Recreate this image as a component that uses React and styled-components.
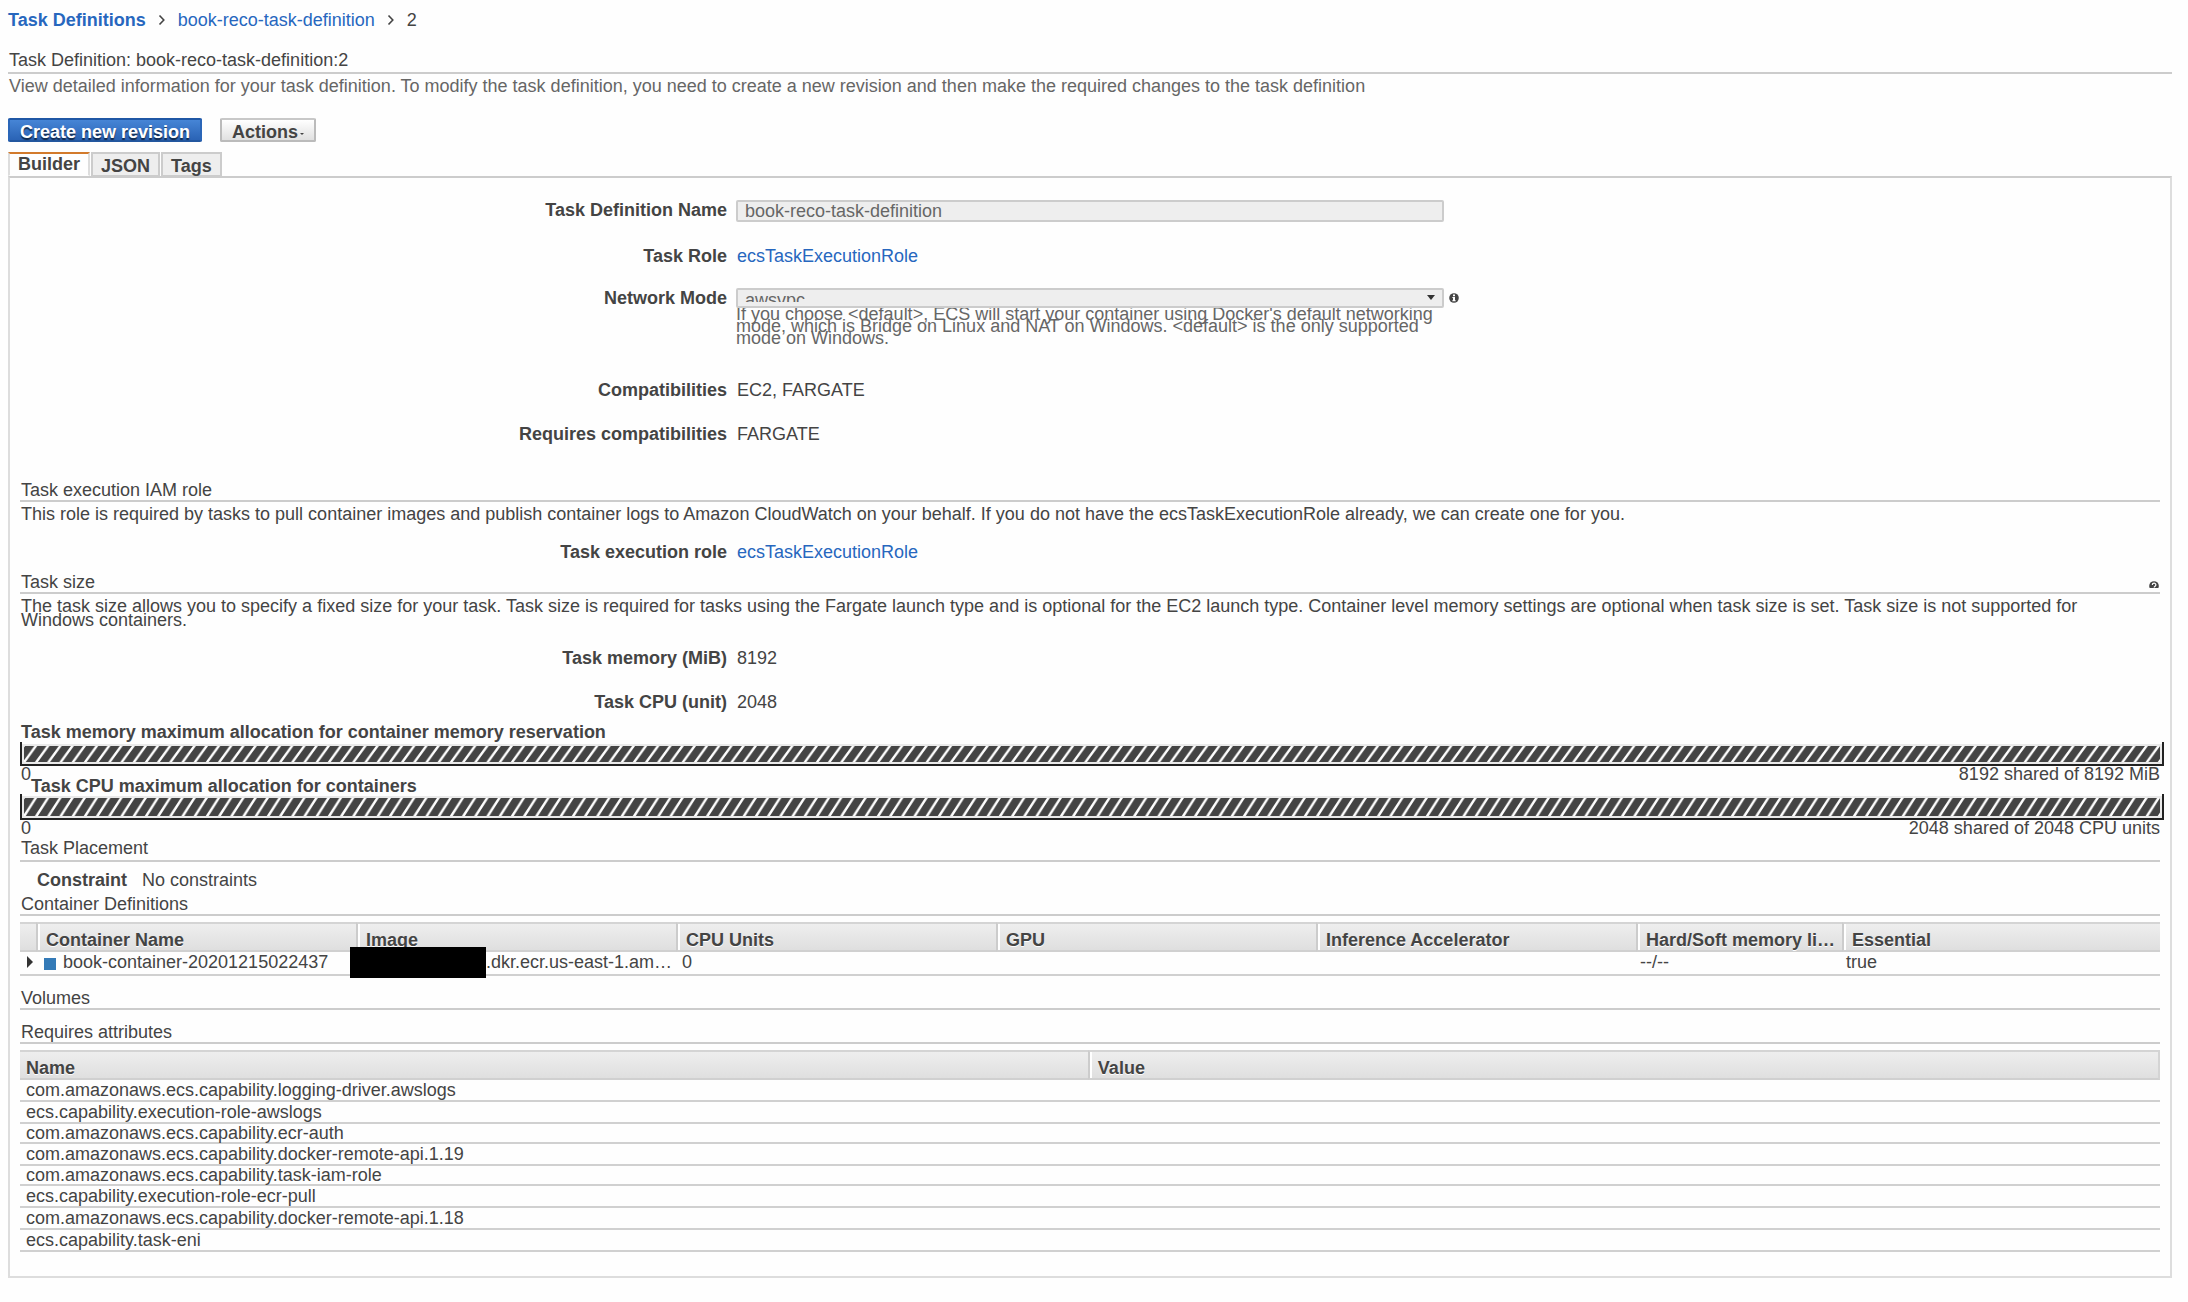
import React from "react";
import styled, { createGlobalStyle, css } from "styled-components";

const Global = createGlobalStyle`
  * { box-sizing: border-box; }
  body {
    margin: 0;
    background: #fefefe;
    color: #444;
    font: 18px/20px "Liberation Sans", Arial, Helvetica, sans-serif;
  }
  a { color: #2767be; text-decoration: none; }
  h1, h2, p, dl, dd, dt, ol { margin: 0; padding: 0; font-size: 18px; font-weight: normal; }
`;

const Page = styled.div`
  padding: 10px 16px 24px 8px;
`;

const Crumbs = styled.ol`
  display: flex;
  align-items: center;
  gap: 12px;
  list-style: none;
  height: 20px;
  a[data-root] { font-weight: bold; }
`;

const Crumb = styled.li`
  display: flex;
  align-items: center;
  gap: 12px;
`;

const Chevron = styled.svg`
  display: block;
  width: 8px;
  height: 12px;
`;

const Heading = styled.h1`
  border-bottom: 2px solid #ccc;
  line-height: 20px;
  height: ${(p) => (p.$roomy ? 24 : 22)}px;
  padding: 0 1px;
  margin-top: ${(p) => p.$top}px;
  display: flex;
  align-items: flex-start;
  justify-content: space-between;
`;

const Intro = styled.p`
  color: #666;
  padding: 2px 1px 0;
`;

const Toolbar = styled.div`
  display: flex;
  gap: 18px;
  margin-top: 22px;
`;

const Button = styled.button`
  height: 24px;
  padding: 4px 10px 0;
  border: 2px solid #bbb;
  border-top-color: #c8c8c8;
  border-radius: 2px;
  background: linear-gradient(#fff, #e0e0e0);
  color: #444;
  font: bold 18px/18px "Liberation Sans", Arial, sans-serif;
  display: flex;
  align-items: center;
  gap: 2px;
  ${(p) =>
    p.$primary &&
    css`
      color: #fff;
      border-color: #1f57a5 #2a66b8 #23579f;
      background: linear-gradient(#4685d6, #2a63b5);
      text-shadow: 0 2px 1px rgba(0, 0, 0, 0.6);
    `}
`;

const TinyCaret = styled.svg`
  width: 4px;
  height: 4px;
  margin-top: 4px;
`;

const Tabs = styled.div`
  display: flex;
  align-items: flex-end;
  gap: 1px;
  margin-top: 10px;
`;

const Tab = styled.button`
  height: 24px;
  padding: 2px 8px 0;
  border: 2px solid #ccc;
  border-bottom-width: 1px;
  background: #eee;
  color: #444;
  font: bold 18px/18px "Liberation Sans", Arial, sans-serif;
  ${(p) =>
    p.$active &&
    css`
      padding: 0 8px 2px;
      background: #fefefe;
      border-color: #d27a2b #ddd transparent;
    `}
`;

const Panel = styled.section`
  border: 2px solid #ddd;
  border-top-color: #ccc;
  padding: 22px 10px 24px;
`;

const Field = styled.div`
  display: grid;
  grid-template-columns: 711fr 708fr 711fr;
  column-gap: 5px;
  align-items: start;
  margin-top: ${(p) => p.$top}px;
  line-height: 20px;
`;

const Label = styled.label`
  text-align: right;
  font-weight: bold;
  padding-right: 4px;
`;

const Value = styled.span`
  padding-left: 1px;
`;

const control = css`
  display: block;
  width: 100%;
  border: 2px solid #ccc;
  border-radius: 2px;
  background: #eee;
  color: #666;
  font: 18px/20px "Liberation Sans", Arial, sans-serif;
`;

const TextInput = styled.input`
  ${control}
  height: 22px;
  padding: 1px 7px 0;
`;

const SelectWrap = styled.div`
  position: relative;
`;

const Select = styled.select`
  ${control}
  appearance: none;
  height: 20px;
  padding: 0 7px 4px;
`;

const SelectCaret = styled.svg`
  position: absolute;
  right: 9px;
  top: 7px;
  width: 8px;
  height: 5px;
`;

const Help = styled.p`
  color: #666;
  line-height: 12px;
`;

const IconButton = styled.button`
  border: 0;
  padding: 0;
  background: none;
  width: 10px;
  height: ${(p) => p.$height}px;
  margin-top: ${(p) => p.$top}px;
  display: flex;
  align-items: flex-start;
  overflow: hidden;
  svg { flex: none; }
`;

const Text = styled.p`
  padding: 2px 1px 0;
  ${(p) =>
    p.$dense &&
    css`
      padding: 5px 40px 0 1px;
      line-height: 14px;
    `}
`;

const BarTitle = styled.h2`
  font-weight: bold;
  line-height: 12px;
  padding-left: ${(p) => p.$indent}px;
  margin-top: ${(p) => p.$top}px;
`;

const Bar = styled.div`
  border: 2px solid #222;
  border-top: 0;
  height: ${(p) => p.$height}px;
  padding: 4px 2px 2px;
  margin: ${(p) => p.$top}px -4px 0 0;
  background: linear-gradient(#fefefe 2px, #eaeaea 2px);
`;

const Stripes = styled.svg`
  display: block;
  width: 100%;
  height: 100%;
`;

const Scale = styled.div`
  display: flex;
  justify-content: space-between;
  height: 14px;
  line-height: 16px;
  padding-left: 1px;
`;

const Constraint = styled.dl`
  display: flex;
  gap: 15px;
  padding-left: 17px;
  margin-top: 8px;
  dt { font-weight: bold; }
`;

const Table = styled.table`
  width: 100%;
  table-layout: fixed;
  border-collapse: separate;
  border-spacing: 0;
  margin-top: 6px;
  th {
    height: 30px;
    padding: 6px 4px 0 6px;
    text-align: left;
    line-height: 20px;
    border-top: 2px solid #d4d4d4;
    border-bottom: 2px solid #d0d0d0;
    background: linear-gradient(#eee, #dfdfdf);
    text-shadow: 0 1px 0 #fff;
    white-space: nowrap;
  }
  th + th {
    border-left: 2px solid #ccc;
    box-shadow: inset 2px 0 0 #fff;
    padding-left: 8px;
  }
  td {
    border-bottom: 2px solid #d0d0d0;
    white-space: nowrap;
  }
`;

const ContainerTable = styled(Table)`
  td { height: 24px; line-height: 20px; padding: 0 0 2px 6px; }
  td:nth-child(n + 6) { padding-left: 4px; }
`;

const AttributeTable = styled(Table)`
  th:first-child { width: 49.9%; }
  th:last-child { border-right: 2px solid #d4d4d4; }
  td { height: 22px; line-height: 20px; padding: 0 6px; }
  tr:nth-child(3) td, tr:nth-child(5) td { height: 20px; line-height: 18px; }
`;

const NameCell = styled.div`
  display: flex;
  align-items: center;
  gap: 7px;
  padding-left: 2px;
`;

const Swatch = styled.span`
  width: 12px;
  height: 12px;
  margin-top: 4px;
  background: #337ab7;
`;

const ImageCell = styled.div`
  display: flex;
  align-items: center;
  margin-left: -12px;
`;

const Redaction = styled.span`
  width: 136px;
  height: 31px;
  margin: -5px 0 -6px;
  background: #000;
  position: relative;
  flex: none;
`;

const Expand = styled.button`
  border: 0;
  padding: 0;
  background: none;
  display: flex;
`;

const containerColumns = [
  ["", 16],
  ["Container Name", 320],
  ["Image", 320],
  ["CPU Units", 320],
  ["GPU", 320],
  ["Inference Accelerator", 320],
  ["Hard/Soft memory li…", 206],
  ["Essential", 318],
];

const attributes = [
  "com.amazonaws.ecs.capability.logging-driver.awslogs",
  "ecs.capability.execution-role-awslogs",
  "com.amazonaws.ecs.capability.ecr-auth",
  "com.amazonaws.ecs.capability.docker-remote-api.1.19",
  "com.amazonaws.ecs.capability.task-iam-role",
  "ecs.capability.execution-role-ecr-pull",
  "com.amazonaws.ecs.capability.docker-remote-api.1.18",
  "ecs.capability.task-eni",
];

function Separator() {
  return (
    <Chevron viewBox="0 0 8 12" aria-hidden="true">
      <path d="M1.5 1.5 L5.8 6 L1.5 10.5" fill="none" stroke="#444" strokeWidth="1.6" />
    </Chevron>
  );
}

function Allocation({ id, height, top }) {
  const h = height - 8;
  return (
    <Bar $height={height} $top={top}>
      <Stripes aria-hidden="true">
        <defs>
          <pattern id={id} width="12.2" height={h} patternUnits="userSpaceOnUse">
            <rect width="12.2" height={h} fill="#444" />
            <path
              d={`M-1.2 ${h} L10.3 0 H13.2 L1.7 ${h} Z M11 ${h} L22.5 0 H25.4 L13.9 ${h} Z M-13.4 ${h} L-1.9 0 H1 L-10.5 ${h} Z`}
              fill="#fefefe"
            />
          </pattern>
        </defs>
        <rect width="100%" height="100%" fill={`url(#${id})`} />
      </Stripes>
    </Bar>
  );
}

export default function App() {
  return (
    <>
      <Global />
      <Page>
        <nav aria-label="Breadcrumb">
          <Crumbs>
            <Crumb><a href="#definitions" data-root="">Task Definitions</a></Crumb>
            <Crumb><Separator /><a href="#definition">book-reco-task-definition</a></Crumb>
            <Crumb><Separator />2</Crumb>
          </Crumbs>
        </nav>
        <Heading $roomy $top={20}>Task Definition: book-reco-task-definition:2</Heading>
        <Intro>
          View detailed information for your task definition. To modify the task definition, you need to create a
          new revision and then make the required changes to the task definition
        </Intro>
        <Toolbar>
          <Button $primary>Create new revision</Button>
          <Button>
            Actions
            <TinyCaret viewBox="0 0 4 4"><path d="M0 1h4L2 3z" fill="#444" /></TinyCaret>
          </Button>
        </Toolbar>
        <Tabs role="tablist">
          <Tab role="tab" aria-selected="true" $active>Builder</Tab>
          <Tab role="tab">JSON</Tab>
          <Tab role="tab">Tags</Tab>
        </Tabs>
        <Panel>
          <Field $top={0}>
            <Label htmlFor="name">Task Definition Name</Label>
            <TextInput id="name" value="book-reco-task-definition" readOnly />
          </Field>
          <Field $top={24}>
            <Label as="span">Task Role</Label>
            <Value><a href="#role">ecsTaskExecutionRole</a></Value>
          </Field>
          <Field $top={22}>
            <Label htmlFor="network">Network Mode</Label>
            <div>
              <SelectWrap>
                <Select id="network" defaultValue="awsvpc">
                  <option>awsvpc</option>
                </Select>
                <SelectCaret viewBox="0 0 8 5"><path d="M0 0h8L4 5z" fill="#333" /></SelectCaret>
              </SelectWrap>
              <Help>
                If you choose &lt;default&gt;, ECS will start your container using Docker's default networking mode,
                which is Bridge on Linux and NAT on Windows. &lt;default&gt; is the only supported mode on Windows.
              </Help>
            </div>
            <IconButton $height={10} $top={5} aria-label="Network mode information">
              <svg width="10" height="10" viewBox="0 0 10 10">
                <circle cx="5" cy="5" r="4.8" fill="#444" />
                <path d="M4 1.6h2v1.6H4zM3.4 4H6v3.2h.7V8.3H3.3V7.2H4V5h-.6z" fill="#fff" />
              </svg>
            </IconButton>
          </Field>
          <Field $top={36}>
            <Label as="span">Compatibilities</Label>
            <Value>EC2, FARGATE</Value>
          </Field>
          <Field $top={24}>
            <Label as="span">Requires compatibilities</Label>
            <Value>FARGATE</Value>
          </Field>

          <Heading as="h2" $top={36}>Task execution IAM role</Heading>
          <Text>
            This role is required by tasks to pull container images and publish container logs to Amazon CloudWatch on
            your behalf. If you do not have the ecsTaskExecutionRole already, we can create one for you.
          </Text>
          <Field $top={18}>
            <Label as="span">Task execution role</Label>
            <Value><a href="#execution-role">ecsTaskExecutionRole</a></Value>
          </Field>

          <Heading as="h2" $top={10}>
            Task size
            <IconButton $height={7} $top={9} aria-label="Task size help">
              <svg width="10" height="10" viewBox="0 0 10 10">
                <circle cx="5" cy="5" r="4.8" fill="#444" />
                <path d="M3.3 4c0-2.4 3.6-2.4 3.6 0 0 1.2-1.7 1.2-1.7 2.5M5.2 7.4v1.2" fill="none" stroke="#fff" strokeWidth="1.2" />
              </svg>
            </IconButton>
          </Heading>
          <Text $dense>
            The task size allows you to specify a fixed size for your task. Task size is required for tasks using the
            Fargate launch type and is optional for the EC2 launch type. Container level memory settings are optional
            when task size is set. Task size is not supported for Windows containers.
          </Text>
          <Field $top={21}>
            <Label as="span">Task memory (MiB)</Label>
            <Value>8192</Value>
          </Field>
          <Field $top={24}>
            <Label as="span">Task CPU (unit)</Label>
            <Value>2048</Value>
          </Field>

          <BarTitle $indent={1} $top={14}>Task memory maximum allocation for container memory reservation</BarTitle>
          <Allocation id="memory" height={24} top={4} />
          <Scale>
            <span>0</span>
            <span>8192 shared of 8192 MiB</span>
          </Scale>
          <BarTitle $indent={11} $top={0}>Task CPU maximum allocation for containers</BarTitle>
          <Allocation id="cpu" height={26} top={2} />
          <Scale>
            <span>0</span>
            <span>2048 shared of 2048 CPU units</span>
          </Scale>

          <Heading as="h2" $roomy $top={4}>Task Placement</Heading>
          <Constraint>
            <dt>Constraint</dt>
            <dd>No constraints</dd>
          </Constraint>
          <Heading as="h2" $top={4}>Container Definitions</Heading>
          <ContainerTable>
            <colgroup>
              {containerColumns.map(([name, width]) => (
                <col key={name} style={{ width: `${(width / 2140) * 100}%` }} />
              ))}
            </colgroup>
            <thead>
              <tr>
                {containerColumns.map(([name]) => (
                  <th key={name}>{name}</th>
                ))}
              </tr>
            </thead>
            <tbody>
              <tr>
                <td>
                  <Expand aria-label="Expand container">
                    <svg width="8" height="12" viewBox="0 0 8 12"><path d="M1 0l6 6-6 6z" fill="#333" /></svg>
                  </Expand>
                </td>
                <td>
                  <NameCell><Swatch />book-container-20201215022437</NameCell>
                </td>
                <td>
                  <ImageCell><Redaction />.dkr.ecr.us-east-1.am…</ImageCell>
                </td>
                <td>0</td>
                <td />
                <td />
                <td>--/--</td>
                <td>true</td>
              </tr>
            </tbody>
          </ContainerTable>

          <Heading as="h2" $top={12}>Volumes</Heading>
          <Heading as="h2" $top={12}>Requires attributes</Heading>
          <AttributeTable>
            <thead>
              <tr>
                <th>Name</th>
                <th>Value</th>
              </tr>
            </thead>
            <tbody>
              {attributes.map((name) => (
                <tr key={name}>
                  <td>{name}</td>
                  <td />
                </tr>
              ))}
            </tbody>
          </AttributeTable>
        </Panel>
      </Page>
    </>
  );
}
